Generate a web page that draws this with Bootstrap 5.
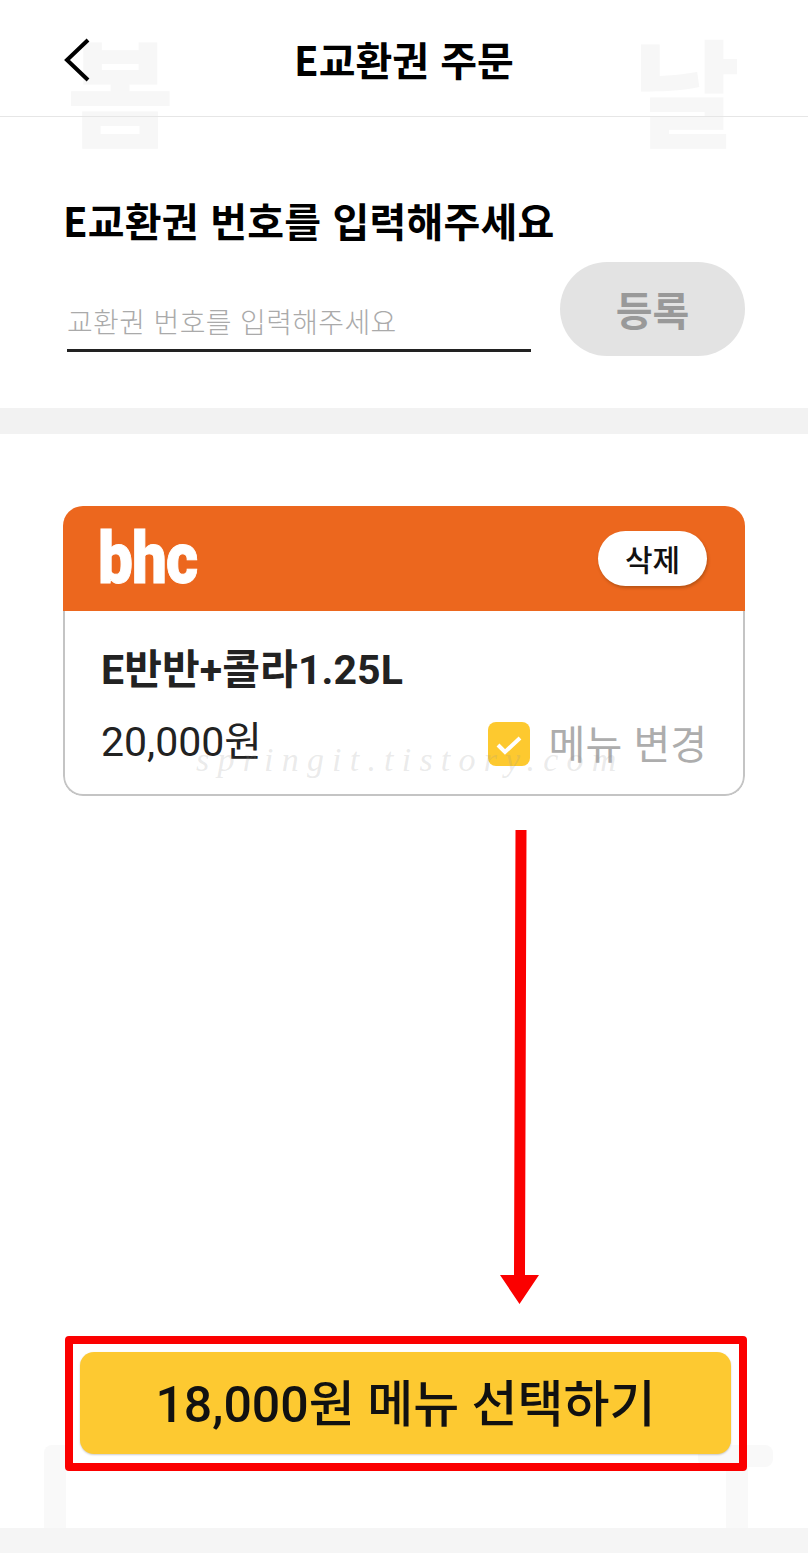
<!DOCTYPE html>
<html lang="ko">
<head>
    <meta charset="UTF-8">
    <meta name="viewport" content="width=device-width, initial-scale=1.0">
    <title>E교환권 주문</title>
    <link rel="stylesheet" href="https://cdn.jsdelivr.net/npm/bootstrap@5.3.0/dist/css/bootstrap.min.css">
    <style>
        body {
            font-family: "Noto Sans CJK KR", "Noto Sans", sans-serif;
            color: #111;
            background: #fff;
        }
        .page-wrap { width: 808px; height: 1553px; overflow: hidden; position: relative; z-index: 0; }

        /* 상단 */
        .top-bar { height: 117px; border-bottom: 1px solid #e6e6e6; position: relative; padding: 37px 0 0 63px; }
        .back-btn { width: 28px; height: 46px; }
        .top-title { position: absolute; left: 0; right: 0; top: 33px; text-align: center; font-size: 40px; font-weight: 700; line-height: 52px; color: #000; }

        /* 입력 */
        .code-box { height: 291px; padding: 0 63px; }
        .code-heading { font-size: 40px; font-weight: 700; line-height: 50px; letter-spacing: .2px; color: #000; padding-top: 78px; margin: 0; }
        .code-row { margin-top: 19px; }
        .code-field { width: 464px; height: 50px; margin-left: 4px; margin-top: 38px; border-bottom: 3px solid #222; font-size: 28px; line-height: 38px; letter-spacing: .35px; color: #aaa; font-weight: 300; }
        .reg-btn { width: 185px; height: 94px; border-radius: 47px; background: #e3e3e3; color: #999; font-size: 40px; font-weight: 700; margin-left: 29px; margin-top: -2px; }
        .gray-band { height: 26px; background: #f2f2f2; }

        /* 쿠폰 */
        .coupon-box { margin: 72px 63px 0; height: 290px; border-radius: 20px; overflow: hidden; }
        .coupon-head { height: 105px; background: #ec671e; padding: 0 38px 0 35px; }
        .bhc-logo { font-family: Roboto, sans-serif; font-weight: 900; font-size: 72px; line-height: 72px; color: #fff; -webkit-text-stroke: 1px #fff; transform: scaleX(.86); transform-origin: left center; letter-spacing: -1px; }
        .del-btn { width: 109px; height: 55px; border-radius: 28px; background: #fff; font-size: 30px; font-weight: 500; color: #111; box-shadow: 1px 2px 3px rgba(120, 60, 10, .45); }
        .coupon-body { height: 185px; padding: 0 36px; border: 2px solid #c4c4c4; border-top: 0; border-radius: 0 0 20px 20px; }
        .menu-name { font-family: Roboto, "Noto Sans CJK KR", sans-serif; font-size: 41px; font-weight: 700; line-height: 50px; letter-spacing: .1px; color: #222; padding-top: 34px; height: 84px; }
        .menu-line { margin-top: 22px; height: 50px; }
        .menu-price { font-family: Roboto, "Noto Sans CJK KR", sans-serif; font-size: 41px; line-height: 50px; color: #222; }
        .check-mark { width: 42px; height: 44px; border-radius: 8px; background: #fdc92f; margin-top: 4px; }
        .menu-change { font-size: 40px; line-height: 50px; color: #adadad; margin-left: 19px; }

        /* 하단 */
        .order-wrap { margin: 540px 61px 0 65px; height: 135px; border: 8px solid #fb0000; border-radius: 4px; padding: 8px 8px 9px 7px; }
        .order-btn { height: 102px; border-radius: 14px; background: #fdc931; font-family: Roboto, "Noto Sans CJK KR", sans-serif; font-size: 50px; font-weight: 500; color: #111; box-shadow: 0 1px 2px rgba(0, 0, 0, .2); border: 0; width: 100%; padding: 4px 0 0; }
        .foot-band { position: absolute; left: 0; right: 0; bottom: 0; height: 25px; background: #f5f5f5; }

        /* 워터마크, 화살표 */
        .wm-big { position: absolute; font-size: 116px; font-weight: 900; line-height: 116px; color: #f7f7f7; z-index: -1; }
        .wm-left { left: 67px; top: 29px; }
        .wm-right { left: 633px; top: 29px; }
        .wm-foot { position: absolute; background: #f9f9f9; z-index: -1; }
        .wm-foot-a { left: 44px; top: 1445px; width: 22px; height: 90px; border-radius: 8px 0 0 0; }
        .wm-foot-b { left: 726px; top: 1465px; width: 22px; height: 70px; }
        .wm-foot-c { left: 698px; top: 1445px; width: 75px; height: 22px; border-radius: 8px; }
        .wm-site { position: absolute; left: 196px; top: 740px; font-family: "Liberation Serif", serif; font-style: italic; font-size: 34px; line-height: 40px; letter-spacing: 8.2px; color: rgba(150, 150, 150, .2); }
        .red-arrow { position: absolute; left: 490px; top: 825px; }
    </style>
</head>
<body>
    <div class="page-wrap">
        <div class="wm-big wm-left">봄</div>
        <div class="wm-big wm-right">날</div>
        <div class="wm-foot wm-foot-a"></div>
        <div class="wm-foot wm-foot-b"></div>
        <div class="wm-foot wm-foot-c"></div>

        <div class="top-bar">
            <div class="back-btn">
                <svg width="28" height="46" viewBox="0 0 28 46"><path d="M25 3 L4 23 L25 43" fill="none" stroke="#000" stroke-width="4"/></svg>
            </div>
            <div class="top-title">E교환권 주문</div>
        </div>

        <div class="code-box">
            <h1 class="code-heading">E교환권 번호를 입력해주세요</h1>
            <div class="d-flex align-items-start code-row">
                <div class="code-field">교환권 번호를 입력해주세요</div>
                <div class="reg-btn d-flex align-items-center justify-content-center">등록</div>
            </div>
        </div>
        <div class="gray-band"></div>

        <div class="coupon-box">
            <div class="coupon-head d-flex justify-content-between align-items-center">
                <div class="bhc-logo">bhc</div>
                <div class="del-btn d-flex align-items-center justify-content-center">삭제</div>
            </div>
            <div class="coupon-body">
                <div class="menu-name">E반반+콜라1.25L</div>
                <div class="menu-line d-flex justify-content-between align-items-center">
                    <div class="menu-price">20,000원</div>
                    <div class="d-flex align-items-center">
                        <div class="check-mark d-flex align-items-center justify-content-center">
                            <svg width="28" height="24" viewBox="0 0 28 24"><path d="M3 13 L10 20 L25 6" fill="none" stroke="#fff" stroke-width="4"/></svg>
                        </div>
                        <div class="menu-change">메뉴 변경</div>
                    </div>
                </div>
            </div>
        </div>

        <div class="order-wrap">
            <button class="order-btn" type="button">18,000원 메뉴 선택하기</button>
        </div>
        <div class="foot-band"></div>

        <div class="wm-site">springit.tistory.com</div>
        <svg class="red-arrow" width="60" height="482" viewBox="0 0 60 482">
            <path d="M25.5 5 L36.5 5 L35 450 L49 450 L29.5 479 L10 450 L24 450 Z" fill="#fb0000"/>
        </svg>
    </div>
    <script src="https://cdn.jsdelivr.net/npm/bootstrap@5.3.0/dist/js/bootstrap.bundle.min.js"></script>
</body>
</html>
